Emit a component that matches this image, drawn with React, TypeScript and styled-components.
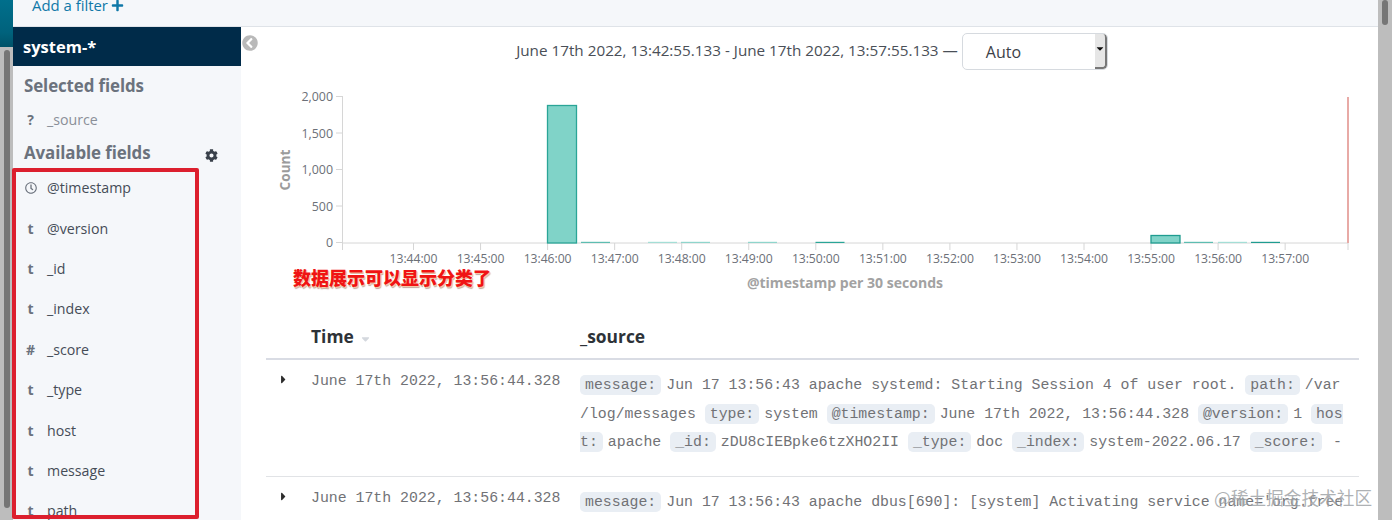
import React from "react";
import styled, { createGlobalStyle } from "styled-components";
import { FaRegClock, FaCog, FaPlus, FaChevronCircleLeft, FaCaretRight, FaSortDown, FaCaretDown } from "react-icons/fa";

const Global = createGlobalStyle`
  html, body { margin: 0; padding: 0; height: 520px; overflow: hidden; background: #fff; }
  #root { height: 520px; }
  * { box-sizing: border-box; }
`;

const Page = styled.div`
  position: relative; width: 1392px; height: 520px; display: flex; overflow: hidden;
  font-family: "Open Sans", "Noto Sans", sans-serif; color: #3f4650; background: #fff;
`;
const Rail = styled.div`width: 13px; display: flex; flex-direction: column; flex: none;`;
const RailTop = styled.div`height: 47px; flex: none; background: linear-gradient(#006f8c, #00627c 70%, #005268);`;
const Track = styled.div<{ $side: "left" | "right" }>`
  flex: 1; display: flex; background: #bdbdbd;
  padding: ${p => (p.$side === "left" ? "3px 3px 12px 4px" : "0 4px 0 4px")};
  align-items: flex-start;
`;
const Thumb = styled.div<{ $h: number }>`
  width: 6px; height: ${p => p.$h}px; background: #767676; border-radius: 3px;
`;
const Center = styled.div`flex: 1; min-width: 0; display: flex; flex-direction: column;`;
const RightBar = styled.div`width: 14px; flex: none; display: flex;`;

const TopBar = styled.div`
  height: 27px; flex: none; background: #f5f7fa; border-bottom: 1px solid #dfe3e8;
  padding: 0 0 14px 19px; display: flex; align-items: flex-end; gap: 3px;
  color: #0f78a8; font-size: 14.9px; line-height: 14px;
`;
const Body = styled.div`flex: 1; min-height: 0; display: flex;`;

const Sidebar = styled.aside`width: 228px; flex: none; background: #f5f7fa; display: flex; flex-direction: column;`;
const IndexName = styled.div`
  height: 39px; flex: none; background: #002b49; color: #fff; font-weight: 700; font-size: 16.5px;
  padding-left: 10px; display: flex; align-items: center;
`;
const SectionTitle = styled.div<{ $top: number }>`
  margin-top: ${p => p.$top}px; padding-left: 11px; height: 24px; display: flex; align-items: center;
  justify-content: space-between; padding-right: 23px;
  font-size: 16.9px; font-weight: 700; color: #6b727d; letter-spacing: -0.1px;
`;
const FieldRow = styled.div<{ $muted?: boolean; $h: number; $gap?: number }>`
  height: ${p => p.$h}px; display: flex; align-items: center; flex: none;
  margin-top: ${p => p.$gap ?? 0}px;
  font-size: 14.2px; color: ${p => (p.$muted ? "#8a8f98" : "#454c57")};
`;
const TypeIcon = styled.span`
  width: 34px; padding: 0 10px 0 11px; flex: none; display: flex; justify-content: center; align-items: center;
  font-weight: 700; font-size: 14px; color: #6b727d;
`;
const GearIcon = styled(FaCog)`color: #39404a; font-size: 13px; margin-top: 6px;`;

const Main = styled.main`flex: 1; min-width: 0; display: flex;`;
const Gutter = styled.div`width: 25px; flex: none; padding: 8px 0 0 1px; color: #b9b9b9; font-size: 16px; line-height: 16px;`;
const Content = styled.div`width: 1093px; flex: none; display: flex; flex-direction: column;`;

const DateBar = styled.div`
  height: 48px; flex: none; padding: 6px 1px 0 0; display: flex; justify-content: center; align-items: flex-start; gap: 4px;
  font-size: 15.25px; color: #4a4f57;
`;
const DateText = styled.span`line-height: 34px;`;
const SelectBox = styled.div`
  position: relative; width: 146px; height: 37px; border: 1px solid #d6dadf; border-radius: 5px; background: #fff;
  padding-left: 23px; display: flex; align-items: center; font-size: 16px; color: #3c4148; overflow: hidden;
`;
const Spinner = styled.span`
  position: absolute; right: 0; top: 0; bottom: 0; width: 12px; background: #e6e6e6;
  border-right: 2px solid #777; border-bottom: 2px solid #777; border-radius: 0 4px 4px 0;
  display: flex; align-items: center; justify-content: center; color: #111; font-size: 11px; padding-bottom: 4px;
`;
const ChartSvg = styled.svg`display: block; flex: none; width: 1093px; height: 232px;`;

const TableHead = styled.div`
  height: 53px; flex: none; display: grid; grid-template-columns: 269px 1fr; padding: 6px 0 0 45px; align-items: center;
  border-bottom: 2px solid #d9dce4; font-size: 17.4px; font-weight: 700; color: #2d3238;
`;
const HeadCell = styled.div`display: flex; align-items: center; gap: 5px;`;
const SortCaret = styled(FaSortDown)`color: #d4d8de; font-size: 13px; margin-top: 2px;`;
const Row = styled.div`
  display: grid; grid-template-columns: 45px 269px 764px; flex: none;
  height: 117px; padding-top: 9px; border-bottom: 1px solid #e1e3e6;
  font-family: "Liberation Mono", monospace; font-size: 14.85px; color: #717276;
`;
const Toggle = styled.div`padding: 4px 0 0 11px; color: #2c2c2c; font-size: 13px; line-height: 16px;`;
const TimeCell = styled.div`line-height: 24px;`;
const SourceCell = styled.div`
  line-height: 28.5px; word-break: break-all; overflow: hidden; padding-top: 2px;
`;
const Key = styled.mark<{ $after?: number }>`
  background: #e9eef4; color: #717276; padding: 2px 5px; border-radius: 5px;
  margin-right: ${p => p.$after ?? 5}px;
`;

const RedFrame = styled.div`
  position: absolute; left: 12px; top: 168px; width: 187px; height: 351px;
  border: 4px solid #dc1f2e; border-radius: 2px; pointer-events: none;
`;
const Note = styled.div`
  position: absolute; left: 293px; top: 264px; font-family: "Noto Sans CJK SC", sans-serif; font-weight: 900;
  font-size: 18px; line-height: 26px; color: #f01414;
  text-shadow: 1px 1px 0 #f3c9a8, -1px 0 0 #fff, 0 -1px 0 #fff, 1px 2px 1px rgba(120,60,40,.45);
`;
const Watermark = styled.div`
  position: absolute; left: 1214px; top: 485px; font-family: "Noto Sans CJK SC", sans-serif;
  font-size: 17.7px; line-height: 24px; color: rgba(120,125,130,.6); white-space: nowrap;
  text-shadow: 0 0 2px rgba(255,255,255,.7);
`;

const fields: [React.ReactNode, string][] = [
  [<FaRegClock key="c" size={12} />, "@timestamp"],
  ["t", "@version"],
  ["t", "_id"],
  ["t", "_index"],
  ["#", "_score"],
  ["t", "_type"],
  ["t", "host"],
  ["t", "message"],
  ["t", "path"],
];

const xTicks = ["13:44:00","13:45:00","13:46:00","13:47:00","13:48:00","13:49:00","13:50:00","13:51:00","13:52:00","13:53:00","13:54:00","13:55:00","13:56:00","13:57:00"];
const yTicks: [string, number][] = [["2,000", 96.5], ["1,500", 133], ["1,000", 169.5], ["500", 206], ["0", 242.5]];
const tallBars: [number, number, string][] = [[547.5, 105.5, "#2aa597"], [1151, 235.5, "#1f9c90"]];
const flatBars: [number, string][] = [
  [581, "#5dbdb1"], [648, "#a4ded6"], [681, "#8fd5cc"], [748, "#8fd5cc"], [815.5, "#2aa597"],
  [1184, "#5dbdb1"], [1218, "#a4ded6"], [1251, "#1f9c90"],
];

const Chart = () => (
  <ChartSvg viewBox="266 75 1093 232" fontFamily="'Open Sans', sans-serif">
    <line x1="342.5" y1="96" x2="342.5" y2="250" stroke="#d6d6d6" />
    <line x1="342" y1="243" x2="1348" y2="243" stroke="#d6d6d6" />
    {yTicks.map(([l, y]) => (
      <g key={l}>
        <line x1="336" x2="342" y1={y} y2={y} stroke="#d6d6d6" />
        <text x="333" y={y + 4.5} textAnchor="end" fontSize="12.4" fill="#6c7078">{l}</text>
      </g>
    ))}
    {xTicks.map((l, i) => {
      const x = 413.5 + i * 67.05;
      return (
        <g key={l}>
          <line x1={x} x2={x} y1="243" y2="250" stroke="#d6d6d6" />
          <text x={x} y="263" textAnchor="middle" fontSize="12.2" letterSpacing="-0.05" fill="#6c7078">{l}</text>
        </g>
      );
    })}
    <line x1="1348" x2="1348" y1="243" y2="250" stroke="#d6d6d6" />
    {tallBars.map(([x, top, c]) => (
      <rect key={x} x={x} y={top} width="29" height={243 - top} fill="#80d3c8" stroke={c} strokeWidth="1.3" />
    ))}
    {flatBars.map(([x, c]) => (
      <rect key={x} x={x} y="241.8" width="29" height="1.2" fill={c} />
    ))}
    <line x1="1348" x2="1348" y1="97" y2="243" stroke="#e8aaa6" strokeWidth="2" />
    <text transform="translate(290 170) rotate(-90)" textAnchor="middle" fontSize="13.6" fontWeight="700" fill="#9b9b9b">Count</text>
    <text x="845" y="288" textAnchor="middle" fontSize="14.05" fontWeight="700" fill="#a2a2a2">@timestamp per 30 seconds</text>
  </ChartSvg>
);

export default function App() {
  return (
    <Page>
      <Global />
      <Rail>
        <RailTop />
        <Track $side="left"><Thumb $h={458} /></Track>
      </Rail>
      <Center>
        <TopBar>Add a filter<FaPlus size={13} /></TopBar>
        <Body>
          <Sidebar>
            <IndexName>system-*</IndexName>
            <SectionTitle $top={8}>Selected fields</SectionTitle>
            <FieldRow $muted $h={30} $gap={7}>
              <TypeIcon>?</TypeIcon>_source
            </FieldRow>
            <SectionTitle $top={7}>Available fields<GearIcon /></SectionTitle>
            <FieldRow $h={40.4} $gap={3.5}>
              <TypeIcon>{fields[0][0]}</TypeIcon>{fields[0][1]}
            </FieldRow>
            {fields.slice(1).map(([t, n]) => (
              <FieldRow key={n} $h={40.4}>
                <TypeIcon>{t}</TypeIcon>{n}
              </FieldRow>
            ))}
          </Sidebar>
          <Main>
            <Gutter><FaChevronCircleLeft /></Gutter>
            <Content>
              <DateBar>
                <DateText>June 17th 2022, 13:42:55.133 - June 17th 2022, 13:57:55.133 —</DateText>
                <SelectBox>Auto<Spinner><FaCaretDown /></Spinner></SelectBox>
              </DateBar>
              <Chart />
              <TableHead>
                <HeadCell>Time<SortCaret /></HeadCell>
                <HeadCell>_source</HeadCell>
              </TableHead>
              <Row>
                <Toggle><FaCaretRight /></Toggle>
                <TimeCell>June 17th 2022, 13:56:44.328</TimeCell>
                <SourceCell>
                  <Key>message:</Key>Jun 17 13:56:43 apache systemd: Starting Session 4 of user root. <Key>path:</Key>/var<wbr />/log/messages <Key>type:</Key>system <Key>@timestamp:</Key>June 17th 2022, 13:56:44.328 <Key>@version:</Key>1 <Key>host:</Key>apache <Key>_id:</Key>zDU8cIEBpke6tzXHO2II <Key>_type:</Key>doc <Key>_index:</Key>system-2022.06.17 <Key $after={11}>_score:</Key>-
                </SourceCell>
              </Row>
              <Row>
                <Toggle><FaCaretRight /></Toggle>
                <TimeCell>June 17th 2022, 13:56:44.328</TimeCell>
                <SourceCell>
                  <Key>message:</Key>Jun 17 13:56:43 apache dbus[690]: [system] Activating service name='org.freedesktop.hostname1'
                </SourceCell>
              </Row>
            </Content>
          </Main>
        </Body>
      </Center>
      <RightBar>
        <Track $side="right"><Thumb $h={25} /></Track>
      </RightBar>
      <RedFrame />
      <Note>数据展示可以显示分类了</Note>
      <Watermark>@稀土掘金技术社区</Watermark>
    </Page>
  );
}
